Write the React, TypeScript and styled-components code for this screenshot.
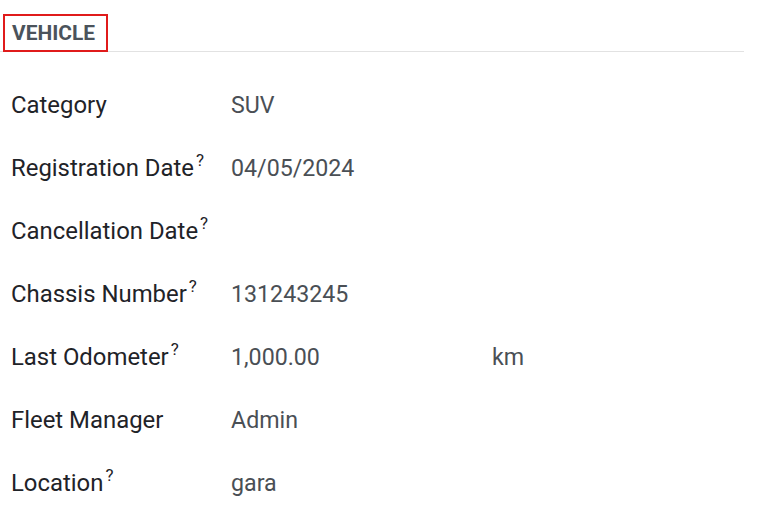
import React from "react";
import styled, { createGlobalStyle } from "styled-components";

const Global = createGlobalStyle`
  html, body { margin: 0; padding: 0; background: #ffffff; }
  body { font-family: Roboto, "Noto Sans", sans-serif; }
`;

const Page = styled.div`
  width: 781px;
  height: 519px;
  overflow: hidden;
  background: #fff;
  padding-top: 14px;
  box-sizing: border-box;
`;

const Header = styled.div`
  width: 744px;
  display: flex;
  border-bottom: 1px solid #e2e2e2;
  padding-left: 3px;
  box-sizing: border-box;
`;

const Title = styled.div`
  border: 2px solid #e01b1b;
  padding: 0 11px 0 7px;
  height: 38px;
  box-sizing: border-box;
  display: flex;
  align-items: center;
  font-size: 20.9px;
  font-weight: 700;
  color: #4b535b;
  margin-bottom: -1px;
`;

const Rows = styled.div`
  padding-top: 21px;
  padding-left: 11px;
`;

const Row = styled.div`
  display: grid;
  grid-template-columns: 220px 261px auto;
  align-items: center;
  height: 63px;
`;

const Label = styled.div`
  color: #1f2328;
  font-size: 23.9px;
  white-space: nowrap;
`;

const Help = styled.sup`
  font-size: 17px;
  margin-left: 2px;
  vertical-align: 10px;
  line-height: 0;
  color: #1f2328;
`;

const Value = styled.div`
  color: #4a4f55;
  font-size: 23.2px;
`;

const Unit = styled.div`
  color: #4a4f55;
  font-size: 23.2px;
`;

type Field = { label: string; help?: boolean; value?: string; unit?: string };

const fields: Field[] = [
  { label: "Category", value: "SUV" },
  { label: "Registration Date", help: true, value: "04/05/2024" },
  { label: "Cancellation Date", help: true, value: "" },
  { label: "Chassis Number", help: true, value: "131243245" },
  { label: "Last Odometer", help: true, value: "1,000.00", unit: "km" },
  { label: "Fleet Manager", value: "Admin" },
  { label: "Location", help: true, value: "gara" },
];

export default function App() {
  return (
    <Page>
      <Global />
      <Header>
        <Title>VEHICLE</Title>
      </Header>
      <Rows>
        {fields.map((f) => (
          <Row key={f.label}>
            <Label>
              {f.label}
              {f.help && <Help>?</Help>}
            </Label>
            <Value>{f.value}</Value>
            <Unit>{f.unit}</Unit>
          </Row>
        ))}
      </Rows>
    </Page>
  );
}
